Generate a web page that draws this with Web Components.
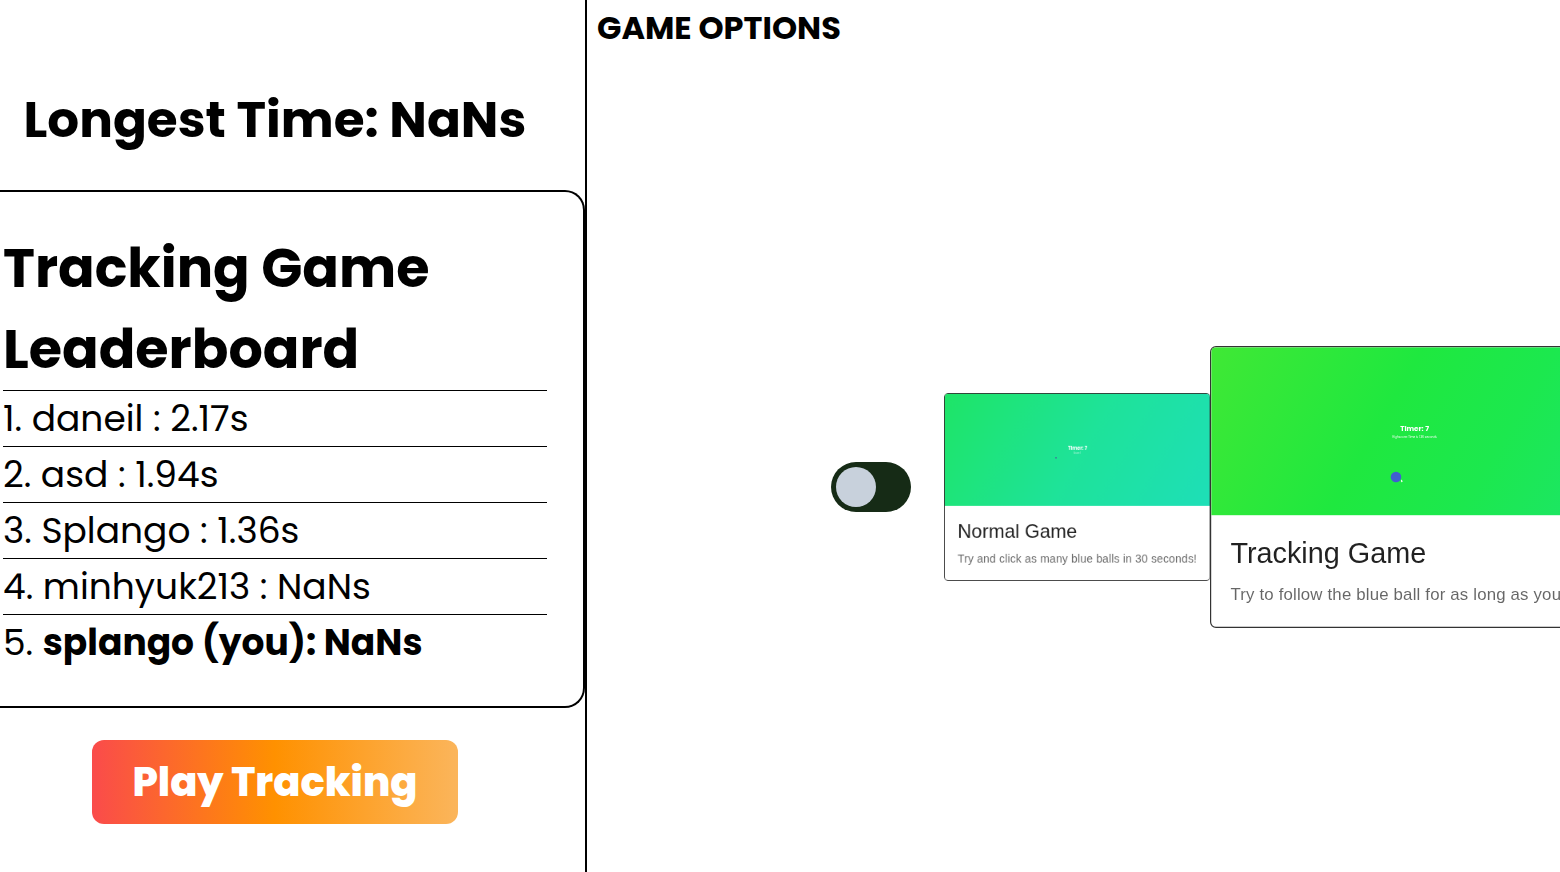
<!DOCTYPE html>
<html lang="en">
<head>
<meta charset="utf-8">
<title>Tracking Game</title>
<style>
body { margin: 0; background: #fff; color: #000; font-family: Poppins, Inter, sans-serif; overflow: hidden; }
</style>
</head>
<body>
<game-app></game-app>
<script>
const define = (name, html) => {
  const t = document.createElement('template');
  t.innerHTML = html;
  customElements.define(name, class extends HTMLElement {
    connectedCallback() {
      if (this.shadowRoot) return;
      this.attachShadow({ mode: 'open' }).append(t.content.cloneNode(true));
    }
  });
};

define('score-row', `
<style>
:host { display: block; box-sizing: border-box; height: 56px; border-top: 1px solid #000; font-size: 36px; line-height: 54px; padding-top: 1px; white-space: nowrap; }
</style><slot></slot>`);

define('leader-board', `
<style>
:host { display: block; box-sizing: border-box; height: 518px; border: 2px solid #000; border-left: 0; border-radius: 0 20px 20px 0; padding: 36px 36px 0 3px; }
h1 { margin: 0; height: 162px; font-size: 54px; line-height: 81px; font-weight: 700; }
strong { font-weight: 700; }
</style>
<h1>Tracking Game<br>Leaderboard</h1>
<score-row>1. daneil : 2.17s</score-row>
<score-row>2. asd : 1.94s</score-row>
<score-row>3. Splango : 1.36s</score-row>
<score-row>4. minhyuk213 : NaNs</score-row>
<score-row>5. <strong>splango (you): NaNs</strong></score-row>`);

define('play-button', `
<style>
:host { display: block; width: 366px; margin: 32px 0 0 92px; }
button { display: flex; align-items: center; justify-content: center; width: 100%; height: 84px; border: 0; border-radius: 12px; padding: 0; color: #fff; background: linear-gradient(90deg, #fa4b4b 0%, #ff9100 50%, #fbb55b 100%); font: 800 40px/60px Poppins, Inter, sans-serif; white-space: nowrap; }
</style><button><slot></slot></button>`);

define('toggle-switch', `
<style>
:host { display: flex; align-items: center; box-sizing: border-box; flex: none; width: 80px; height: 50px; padding: 5px; border-radius: 25px; background: #162b16; }
i { width: 40px; height: 40px; border-radius: 50%; background: #c8d1dc; }
</style><i></i>`);

define('game-card', `
<style>
:host { display: block; flex: none; width: calc(var(--w) * var(--s) * 1px); height: calc(234.6px * var(--s)); font-family: "Liberation Sans", Arial, sans-serif; }
article { box-sizing: border-box; width: calc(var(--w) * 1px); height: 235px; border: 1px solid #333; border-radius: 5px; overflow: hidden; background: #fff; transform: scale(var(--s)); transform-origin: 0 0; will-change: transform; }
.media { height: 140px; background: var(--bg); }
.body { padding: 16px; white-space: nowrap; }
h2 { margin: 0 0 8.4px; font-size: 24px; line-height: 32px; font-weight: 400; color: rgba(0,0,0,.87); }
p { margin: 0; font-size: 14px; line-height: 20px; letter-spacing: .15px; color: rgba(0,0,0,.6); }
</style>
<article><div class="media"><slot name="art"></slot></div>
<div class="body"><h2><slot name="title"></slot></h2><p><slot></slot></p></div></article>`);

define('game-app', `
<style>
:host { display: grid; grid-template-columns: 587px 1fr; width: 1560px; height: 872px; overflow: hidden; }
aside { border-right: 2px solid #000; }
header { box-sizing: border-box; height: 190px; padding: 82px 0 0 23.5px; font-size: 50px; line-height: 75px; font-weight: 700; }
main { display: grid; grid-template-rows: 100px 774px; overflow: hidden; }
h3 { margin: 0; padding: 4px 0 0 10px; font-size: 32px; line-height: 48px; font-weight: 700; }
.games { display: flex; align-items: center; padding-left: 244px; }
.cards { display: flex; align-items: center; margin-left: 33px; }
svg { display: block; width: 100%; height: 100%; }
svg text { font-family: Poppins, Inter, sans-serif; fill: #fff; text-anchor: middle; }
</style>
<aside>
<header>Longest Time: NaNs</header>
<leader-board></leader-board>
<play-button>Play Tracking</play-button>
</aside>
<main>
<h3>GAME OPTIONS</h3>
<div class="games">
<toggle-switch></toggle-switch>
<div class="cards">
<game-card style="--s:.8;--w:333;--bg:linear-gradient(120deg,#1ee567 0%,#1ee39a 52%,#1edfb8 100%)">
<svg slot="art" viewBox="0 0 331 140"><text x="166" y="70" font-weight="700" font-size="6">Timer: 7</text><text x="165.5" y="75" font-size="2.5" opacity=".7">Score: 1</text><circle cx="139" cy="80" r=".9" fill="#46659a"/></svg>
<span slot="title">Normal Game</span>Try and click as many blue balls in 30 seconds!</game-card>
<game-card style="--s:1.2;--w:342;--bg:linear-gradient(120deg,#40e835 0%,#1fe83f 42%,#1ce84e 68%,#1ce56c 100%)">
<svg slot="art" viewBox="0 0 340 140"><text x="169.5" y="70" font-weight="700" font-size="6">Timer: 7</text><text x="169.5" y="75.3" font-size="2.4" opacity=".9">Highscore: Time is 1.36 seconds</text><circle cx="154" cy="108.2" r="4.4" fill="#405ed0"/><path d="M158.2 110.2l1.8 1.7-1 .1-.8.7z" fill="#fff"/></svg>
<span slot="title">Tracking Game</span>Try to follow the blue ball for as long as you can!</game-card>
</div>
</div>
</main>`);
</script>
</body>
</html>
